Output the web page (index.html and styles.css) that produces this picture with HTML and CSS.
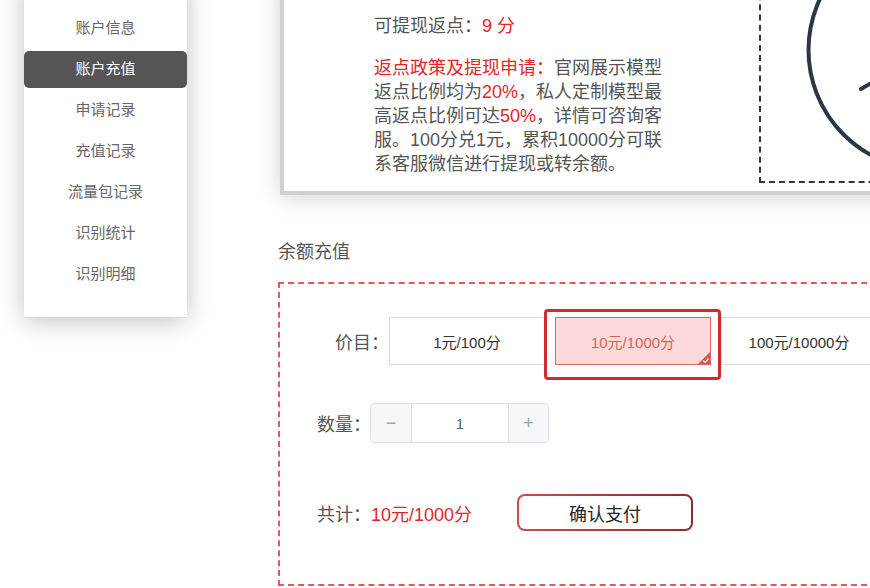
FILE: index.html
```html
<!DOCTYPE html>
<html lang="zh-CN">
<head>
<meta charset="utf-8">
<title>账户充值</title>
<link rel="stylesheet" href="styles.css">
</head>
<body>
<div class="page">
  <aside class="sidebar">
    <ul class="menu">
      <li class="menu-item">账户信息</li>
      <li class="menu-item active">账户充值</li>
      <li class="menu-item">申请记录</li>
      <li class="menu-item">充值记录</li>
      <li class="menu-item">流量包记录</li>
      <li class="menu-item">识别统计</li>
      <li class="menu-item">识别明细</li>
    </ul>
  </aside>
  <main class="main">
    <section class="card">
      <div class="card-text">
        <p class="rebate">可提现返点：<span class="red">9 分</span></p>
        <p class="policy"><span class="red">返点政策及提现申请：</span>官网展示模型返点比例均为<span class="red">20%</span>，私人定制模型最高返点比例可达<span class="red">50%</span>，详情可咨询客服。100分兑1元，累积10000分可联系客服微信进行提现或转余额。</p>
      </div>
      <div class="qr-box">
        <svg class="qr-art" viewBox="0 0 300 199" width="300" height="199">
          <circle cx="167" cy="64" r="119.5" fill="none" stroke="#2c3744" stroke-width="4"/>
          <line x1="100" y1="103" x2="167" y2="64" stroke="#2c3744" stroke-width="4" stroke-linecap="round"/>
        </svg>
      </div>
    </section>

    <h2 class="section-title">余额充值</h2>

    <section class="recharge">
      <div class="row row-price">
        <span class="label label-price">价目：</span>
        <div class="options">
          <div class="option">1元/100分</div>
          <div class="option selected">10元/1000分
            <span class="corner"><svg viewBox="0 0 12 12" width="12" height="12"><path d="M0 12 L12 0 L12 12 Z" fill="#d9534f"/><path d="M5.5 9 L7.2 10.4 L10.2 7" fill="none" stroke="#fff" stroke-width="1.2" stroke-linecap="round" stroke-linejoin="round"/></svg></span>
            <span class="focus-ring"></span>
          </div>
          <div class="option">100元/10000分</div>
        </div>
      </div>

      <div class="row row-qty">
        <span class="label label-qty">数量：</span>
        <div class="stepper">
          <span class="step step-minus">−</span>
          <span class="step-value">1</span>
          <span class="step step-plus">+</span>
        </div>
      </div>

      <div class="row row-total">
        <span class="label label-total">共计：</span>
        <span class="total-value">10元/1000分</span>
        <button class="pay-btn" type="button">确认支付</button>
      </div>
    </section>
  </main>
</div>
</body>
</html>
```
FILE: styles.css
```css
* { box-sizing: border-box; }

html, body {
  margin: 0;
  padding: 0;
  background: #fff;
  overflow: hidden;
  height: 588px;
}

body {
  font-family: "Liberation Sans", "Noto Sans CJK SC", sans-serif;
  color: #555;
}

.page {
  display: flex;
  align-items: flex-start;
  width: 1100px;
}

/* Sidebar */
.sidebar {
  flex: 0 0 163px;
  margin-left: 24px;
  margin-top: -20px;
  padding: 30px 0 24px;
  background: #fff;
  border-bottom: 1px solid #d8d8d8;
  box-shadow: 0 3px 24px rgba(0, 0, 0, 0.24);
}

.menu {
  list-style: none;
  margin: 0;
  padding: 0;
  display: flex;
  flex-direction: column;
  gap: 4px;
}

.menu-item {
  height: 37px;
  line-height: 36px;
  text-align: center;
  font-size: 15px;
  color: #666;
  border-radius: 5px;
}

.menu-item.active {
  background: #555;
  color: #fff;
}

/* Main column */
.main {
  flex: 0 0 760px;
  margin-left: 91px;
}

.card {
  display: flex;
  margin-left: 2px;
  margin-top: -20px;
  border: 4px solid #d0d0d0;
  background: #fff;
  box-shadow: 0 2px 22px rgba(0, 0, 0, 0.18);
}

.card-text {
  flex: 0 0 290px;
  margin-left: 90px;
  padding: 30px 0 15px;
  font-size: 18px;
  line-height: 24px;
  color: #555;
}

.card-text p {
  margin: 0;
}

.card-text .rebate {
  margin-bottom: 18px;
}

.red {
  color: #e3242b;
}

.qr-box {
  position: relative;
  flex: 1 1 auto;
  margin-left: 95px;
  margin-bottom: 8px;
  border: 2px dashed #2c3744;
  overflow: hidden;
}

.qr-art {
  position: absolute;
  left: 0;
  top: 0;
}

.section-title {
  margin: 45px 0 0;
  height: 24px;
  line-height: 24px;
  font-size: 18px;
  font-weight: normal;
  color: #555;
}

/* Recharge box */
.recharge {
  margin-top: 18px;
  border: 2px dashed #e05a5a;
  padding: 33px 0 53px;
}

.row {
  display: flex;
  align-items: center;
}

.label {
  flex: 0 0 auto;
  font-size: 18px;
  color: #555;
  white-space: nowrap;
}

.row-price {
  padding-left: 55px;
  height: 48px;
}

.label-price {
  width: 54px;
}

.options {
  display: flex;
  gap: 10px;
}

.option {
  position: relative;
  flex: 0 0 156px;
  width: 156px;
  height: 48px;
  border: 1px solid #dcdcdc;
  display: flex;
  align-items: center;
  justify-content: center;
  font-size: 15px;
  color: #333;
}

.option.selected {
  background: #fdd9d9;
  border-color: #e06666;
  color: #e0605a;
}

.corner {
  position: absolute;
  right: 0;
  bottom: 0;
  width: 12px;
  height: 12px;
  line-height: 0;
}

.focus-ring {
  position: absolute;
  left: -12px;
  top: -9px;
  right: -11px;
  bottom: -16px;
  border: 3px solid #d52a2d;
  border-radius: 4px;
  pointer-events: none;
}

.row-qty {
  margin-top: 38px;
  padding-left: 37px;
  height: 40px;
}

.label-qty {
  width: 53px;
}

.stepper {
  flex: 0 0 179px;
  display: grid;
  grid-template-columns: 41px 1fr 40px;
  width: 179px;
  height: 40px;
  border: 1px solid #dcdfe6;
  border-radius: 4px;
  overflow: hidden;
}

.step {
  display: flex;
  align-items: center;
  justify-content: center;
  background: #f5f7fa;
  color: #a0a4ab;
  font-size: 18px;
}

.step-minus {
  border-right: 1px solid #dcdfe6;
}

.step-plus {
  border-left: 1px solid #dcdfe6;
}

.step-value {
  display: flex;
  align-items: center;
  justify-content: center;
  font-size: 15px;
  color: #606266;
}

.row-total {
  margin-top: 51px;
  padding-left: 37px;
  height: 37px;
}

.label-total {
  width: 54px;
}

.total-value {
  flex: 0 0 146px;
  font-size: 18px;
  color: #e3242b;
  white-space: nowrap;
}

.pay-btn {
  flex: 0 0 176px;
  width: 176px;
  height: 37px;
  padding: 0;
  font-family: inherit;
  font-size: 18px;
  color: #222;
  border: 2px solid transparent;
  border-radius: 8px;
  background:
    linear-gradient(#fff, #fff) padding-box,
    linear-gradient(90deg, #d04a4a, #8e2a30) border-box;
}
```
